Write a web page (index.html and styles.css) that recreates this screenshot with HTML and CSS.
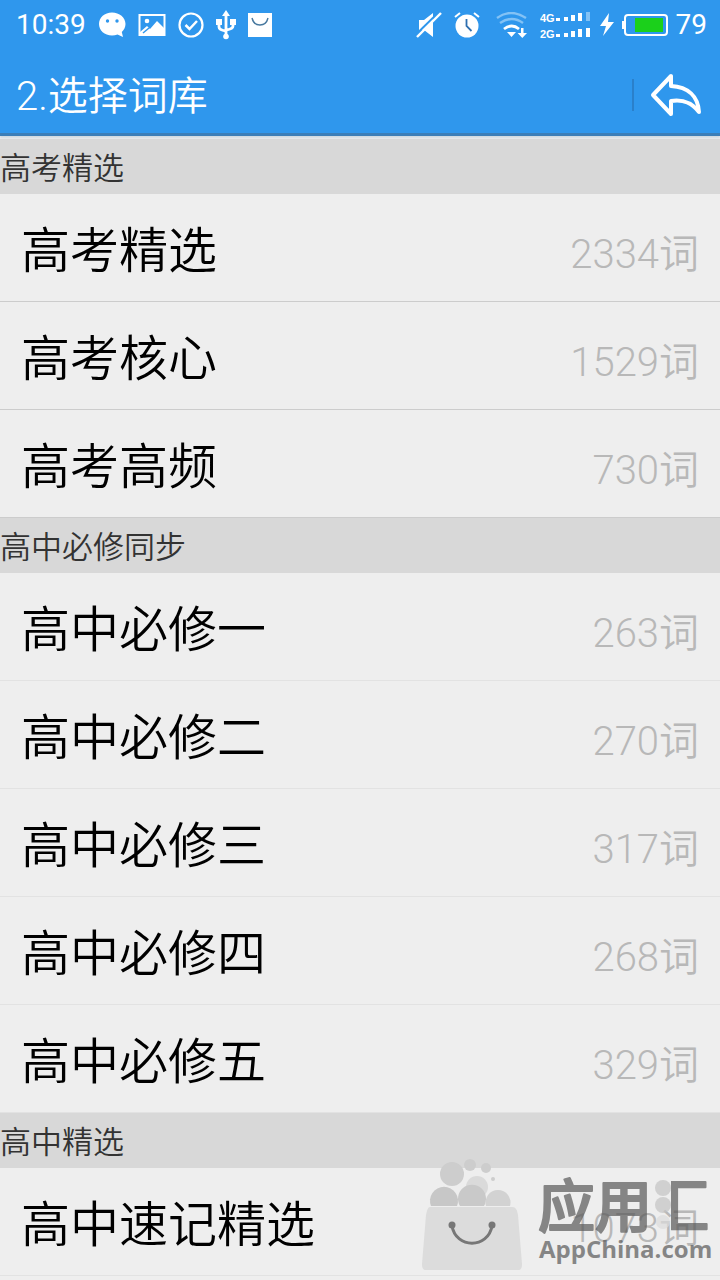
FILE: index.html
```html
<!DOCTYPE html>
<html lang="zh-CN">
<head>
<meta charset="utf-8">
<meta name="viewport" content="width=device-width, initial-scale=1">
<title>选择词库</title>
<link rel="stylesheet" href="styles.css">
</head>
<body>
<div class="screen">
  <header class="top">
    <div class="status">
      <div class="status-group">
        <span class="clock">10:39</span>
        <svg class="icon" width="28" height="28" viewBox="0 0 28 28"><path fill="#fff" d="M14 1.500C6.500 1.500 1 6.500 1 13c0 6.500 5.500 11.500 13 11.500 2 0 3.800-.3 5.500-1L25 26l-1.200-5c2.200-2 3.700-4.800 3.700-8C27.500 6.500 21.500 1.500 14 1.500z"/><circle cx="9.500" cy="10" r="1.700" fill="#2f97ed"/><circle cx="19" cy="10" r="1.700" fill="#2f97ed"/></svg>
        <svg class="icon" width="28" height="24" viewBox="0 0 28 24"><path fill="none" stroke="#fff" stroke-width="2" d="M1.500 2h25v20h-25z"/><circle cx="9" cy="8" r="2.300" fill="#fff"/><path fill="#fff" d="M2 22v-3l7-6 3 3 7-8 8 8v6z"/><path stroke="#2f97ed" stroke-width="1.500" d="M5 20l6-5"/></svg>
        <svg class="icon" width="26" height="26" viewBox="0 0 26 26"><circle cx="13" cy="13" r="11.500" fill="none" stroke="#fff" stroke-width="2.200"/><path fill="none" stroke="#fff" stroke-width="2.500" d="M7.500 13l4 4 7.500-8"/></svg>
        <svg class="icon" width="20" height="30" viewBox="0 0 20 30"><path fill="none" stroke="#fff" stroke-width="2.800" d="M10 4v22M3 12v5q0 3 7 4M17 12v4q0 3-7 4"/><path fill="#fff" d="M10 0l4 6H6zM0 9h6v6H0zM14 9h6v6h-6z"/><circle cx="10" cy="26.500" r="2.800" fill="#fff"/></svg>
        <svg class="icon" width="24" height="24" viewBox="0 0 24 24"><path fill="#fff" d="M0 0h24v24H0z"/><path fill="none" stroke="#47789e" stroke-width="1.400" d="M4 5c1 4 4 7 8 7s7-3 8-7"/></svg>
      </div>
      <div class="status-group status-right">
        <svg class="icon" width="26" height="26" viewBox="0 0 26 26"><path fill="#fff" d="M3 8h5l9-7v24l-9-7H3z"/><path stroke="#2f97ed" stroke-width="2" d="M0 22.500L22 1"/><path stroke="#fff" stroke-width="2.400" d="M1 25L25 1"/></svg>
        <svg class="icon" width="26" height="26" viewBox="0 0 26 26"><circle cx="13" cy="14" r="11.500" fill="#fff"/><path fill="none" stroke="#fff" stroke-width="2" d="M1 5l5-4M20 1l5 4"/><path fill="none" stroke="#2f6fb0" stroke-width="1.800" d="M12.500 7v7l5 5"/></svg>
        <svg class="icon wifi" width="32" height="27" viewBox="0 0 32 27"><path fill="none" stroke="#83c2f5" stroke-width="2.400" d="M1 6Q15-4 30 6M4 11q12-8 23 0"/><path fill="none" stroke="#fff" stroke-width="2.800" d="M8 17q8-6 15 0"/><path fill="#fff" d="M11 20h9l-4.500 5zM25 16h2.500v5H31l-4.700 5-4.700-5H25z"/></svg>
        <svg class="icon" width="52" height="28" viewBox="0 0 52 28"><text class="net" x="0" y="11">4G</text><text class="net" x="0" y="27">2G</text><path fill="#fff" d="M16 7h4v3h-4zM24 6h4v4h-4zM31 4h4v6h-4zM38 2h4v8h-4zM16 23h4v3h-4zM24 22h4v4h-4zM31 20h4v6h-4zM38 18h4v8h-4zM46 17h4v9h-4z"/><path fill="#83c2f5" d="M46 1h4v9h-4z"/></svg>
        <svg class="icon" width="14" height="24" viewBox="0 0 14 24"><path fill="#fff" d="M9 0L0 13h6L3 23l11-14H8z"/></svg>
        <svg class="icon" width="46" height="24" viewBox="0 0 46 24"><rect x="3" y="2" width="42" height="20" rx="3" fill="none" stroke="#fff" stroke-width="2"/><path fill="#fff" d="M0 8h2v8H0z"/><path fill="#1bd01b" d="M13 5h28v14H13z"/></svg>
        <span class="clock">79</span>
      </div>
    </div>
    <div class="title-bar">
      <h1 class="title">2.选择词库</h1>
      <button class="back" aria-label="返回">
        <svg width="52" height="44" viewBox="0 0 52 44"><path fill="none" stroke="#fff" stroke-width="4" stroke-linejoin="round" d="M3 22L21 3v10c17 1 27 10 28 26-7-9-15-13-28-11v13z"/></svg>
      </button>
    </div>
  </header>
  <main>
    <section>
      <h2 class="group">高考精选</h2>
      <button class="row"><span class="name">高考精选</span><span class="count">2334词</span></button>
      <button class="row"><span class="name">高考核心</span><span class="count">1529词</span></button>
      <button class="row"><span class="name">高考高频</span><span class="count">730词</span></button>
    </section>
    <section class="soft">
      <h2 class="group">高中必修同步</h2>
      <button class="row"><span class="name">高中必修一</span><span class="count">263词</span></button>
      <button class="row"><span class="name">高中必修二</span><span class="count">270词</span></button>
      <button class="row"><span class="name">高中必修三</span><span class="count">317词</span></button>
      <button class="row"><span class="name">高中必修四</span><span class="count">268词</span></button>
      <button class="row"><span class="name">高中必修五</span><span class="count">329词</span></button>
    </section>
    <section class="soft">
      <h2 class="group">高中精选</h2>
      <button class="row"><span class="name">高中速记精选</span><span class="count">1073词</span></button>
    </section>
  </main>
  <div class="watermark">
    <svg width="100" height="112" viewBox="0 0 100 112"><g fill="#cdcdcd"><circle cx="30" cy="15" r="12"/><circle cx="48" cy="6" r="6"/><circle cx="64" cy="9" r="5"/><circle cx="71" cy="20" r="2"/><circle cx="55" cy="28" r="11" fill="#dadada"/></g><path fill="#c7c7c7" d="M9 47a14 14 0 1 1 26 0z"/><path fill="#c9c9c9" d="M38 47a14 14 0 1 1 24 0z"/><path fill="#d2d2d2" d="M64 47a12.500 12.500 0 1 1 24 0z"/><path fill="#dcdcdc" d="M8 48h82c4 0 5 3 6 8l4 49c0 4-1 6-4 6H4c-3 0-4-2-4-6l4-49c1-5 2-8 4-8z"/><g fill="#777"><circle cx="30" cy="66" r="3.500"/><circle cx="70" cy="66" r="3.500"/></g><path fill="none" stroke="#777" stroke-width="3" d="M30 67c4 23 36 23 40 0"/></svg>
    <svg class="brand" width="172" height="92" viewBox="0 0 172 92">
      <defs><linearGradient id="fade"><stop offset="0.330" stop-color="#c4c4c4" stop-opacity="0"/><stop offset="0.330" stop-color="#5a5a5a"/></linearGradient></defs>
      <text class="brand-cn" x="0" y="48">应用</text>
      <text class="brand-cn faded" x="114" y="48">汇</text>
      <g fill="#c4c4c4"><circle cx="125" cy="9" r="8"/><circle cx="125" cy="26" r="8"/><circle cx="125" cy="43" r="7" fill="#dcdcdc"/></g>
      <text class="brand-en" x="1" y="79">AppChina.com</text>
    </svg>
  </div>
</div>
</body>
</html>
```
FILE: styles.css
```css
* { box-sizing: border-box; }
body {
  margin: 0;
  background: #eee;
  font-family: Roboto, "Noto Sans CJK SC", sans-serif;
  font-weight: 350;
}
button { font: inherit; border: 0; background: none; padding: 0; }
.screen {
  position: relative;
  min-height: 100vh;
  overflow: hidden;
}
.top {
  background: #2f97ed;
  color: #fff;
  border-bottom: 3px solid #3b7eb8;
  box-shadow: 0 2px 2px #d0dae2;
  margin-bottom: 3px;
}
.status {
  display: flex;
  justify-content: space-between;
  align-items: center;
  height: 50px;
  padding: 0 13px 0 16px;
}
.status-group { display: flex; align-items: center; gap: 12px; }
.status-right { gap: 8px; }
.icon { flex: none; display: block; }
.wifi { margin: 0 4px 0 8px; }
.status-right .icon:first-child { margin-right: 4px; }
.clock { font-size: 28px; line-height: 50px; font-weight: 400; }
.net { font: bold 11px "Liberation Sans", sans-serif; fill: #fff; }
.title-bar {
  display: flex;
  align-items: center;
  justify-content: space-between;
  height: 83px;
  padding: 6px 18px 0 16px;
}
.title { margin: 0; padding-top: 4px; font-size: 40px; line-height: 60px; font-weight: 350; }
.back {
  display: flex;
  align-items: center;
  height: 32px;
  padding-left: 16px;
  border-left: 2px solid #2a80cb;
}
.group {
  margin: 0;
  height: 55px;
  font-size: 31px;
  line-height: 60px;
  font-weight: 350;
  color: #333;
  background: #d8d8d8;
}
.row {
  display: flex;
  width: 100%;
  height: 108px;
  justify-content: space-between;
  align-items: center;
  padding: 9px 21px 0;
  border-bottom: 1px solid #ccc;
}
.soft .row { border-bottom-color: #e2e2e2; }
.name { font-size: 49px; line-height: 72px; color: #000; }
.count { font-size: 40px; line-height: 60px; color: #b8b8b8; padding-top: 6px; }
.watermark {
  position: absolute;
  right: 10px;
  bottom: 9px;
  display: flex;
  align-items: flex-end;
  gap: 16px;
}
.brand { overflow: visible; opacity: 0.700; }
.brand-cn {
  font-family: "Noto Sans CJK SC", sans-serif;
  font-weight: 500;
  font-size: 57px;
  fill: #5a5a5a;
  stroke: #5a5a5a;
  stroke-width: 2px;
  stroke-linejoin: round;
}
.faded { fill: url(#fade); stroke: url(#fade); }
.brand-en { font: bold 24px "Open Sans", sans-serif; fill: #5a5a5a; }
```
